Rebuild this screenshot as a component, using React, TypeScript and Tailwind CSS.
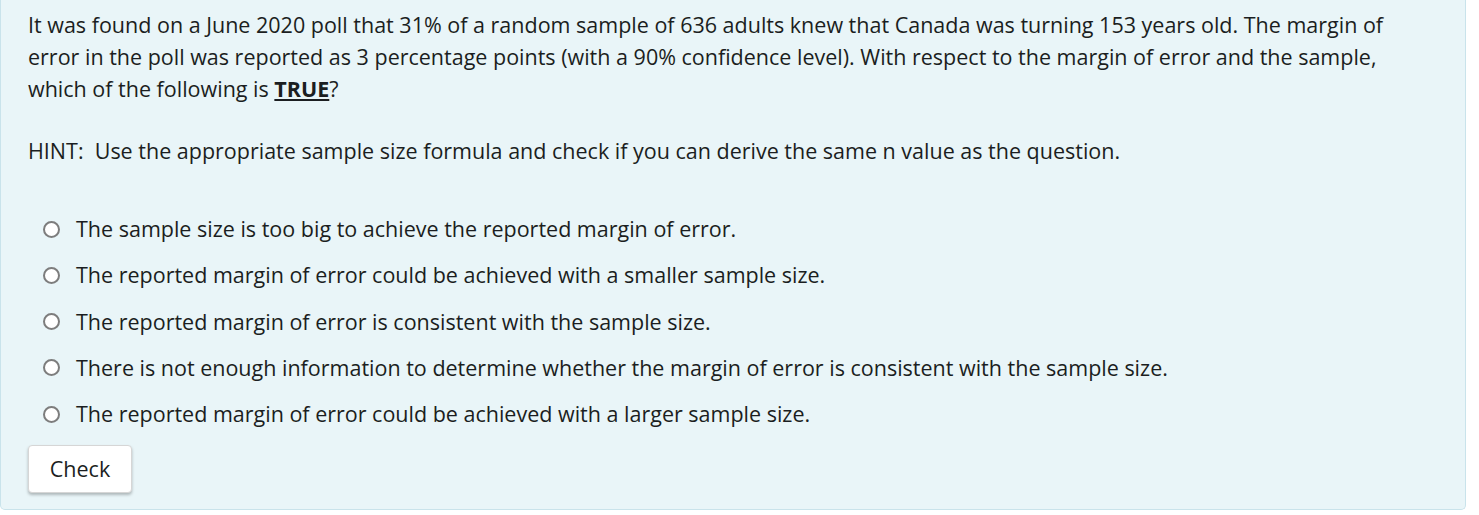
const OPTIONS = [
  "The sample size is too big to achieve the reported margin of error.",
  "The reported margin of error could be achieved with a smaller sample size.",
  "The reported margin of error is consistent with the sample size.",
  "There is not enough information to determine whether the margin of error is consistent with the sample size.",
  "The reported margin of error could be achieved with a larger sample size.",
];

export default function App() {
  return (
    <div className="h-[515px] w-[1479px] bg-white font-['Open_Sans',sans-serif] text-[21.5px] text-[#1b1e21]">
      <div className="w-[1466px] rounded-b-[5px] border border-t-0 border-[#c9e3eb] bg-[#e9f5f8] px-[27px] pt-[9px] pb-[16px]">
        <p className="leading-[32px]">
          It was found on a June 2020 poll that 31% of a random sample of 636 adults knew that Canada was
          turning 153 years old. The margin of
          <br />
          error in the poll was reported as 3 percentage points (with a 90% confidence level). With respect to
          the margin of error and the sample,
          <br />
          which of the following is <b className="font-bold underline decoration-2 underline-offset-[2px]">TRUE</b>?
        </p>
        <p className="mt-[30px] leading-[32px]">
          HINT:&nbsp; Use the appropriate sample size formula and check if you can derive the same n value as the
          question.
        </p>

        {/* Answer choices */}
        <div className="mt-[39px] flex flex-col">
          {OPTIONS.map((opt) => (
            <label key={opt} className="flex h-[46.25px] items-center">
              <span className="ml-[15px] mr-[16px] h-[17px] w-[17px] shrink-0 rounded-full border-2 border-[#7d7d7d] bg-white" />
              <span>{opt}</span>
            </label>
          ))}
        </div>

        <button className="mt-[8px] h-[48px] w-[104px] rounded-[4px] border border-[#d6d6d6] bg-white text-[21.5px] text-[#1b1e21] shadow-[0_2px_3px_rgba(0,0,0,0.25)]">
          Check
        </button>
      </div>
    </div>
  );
}
